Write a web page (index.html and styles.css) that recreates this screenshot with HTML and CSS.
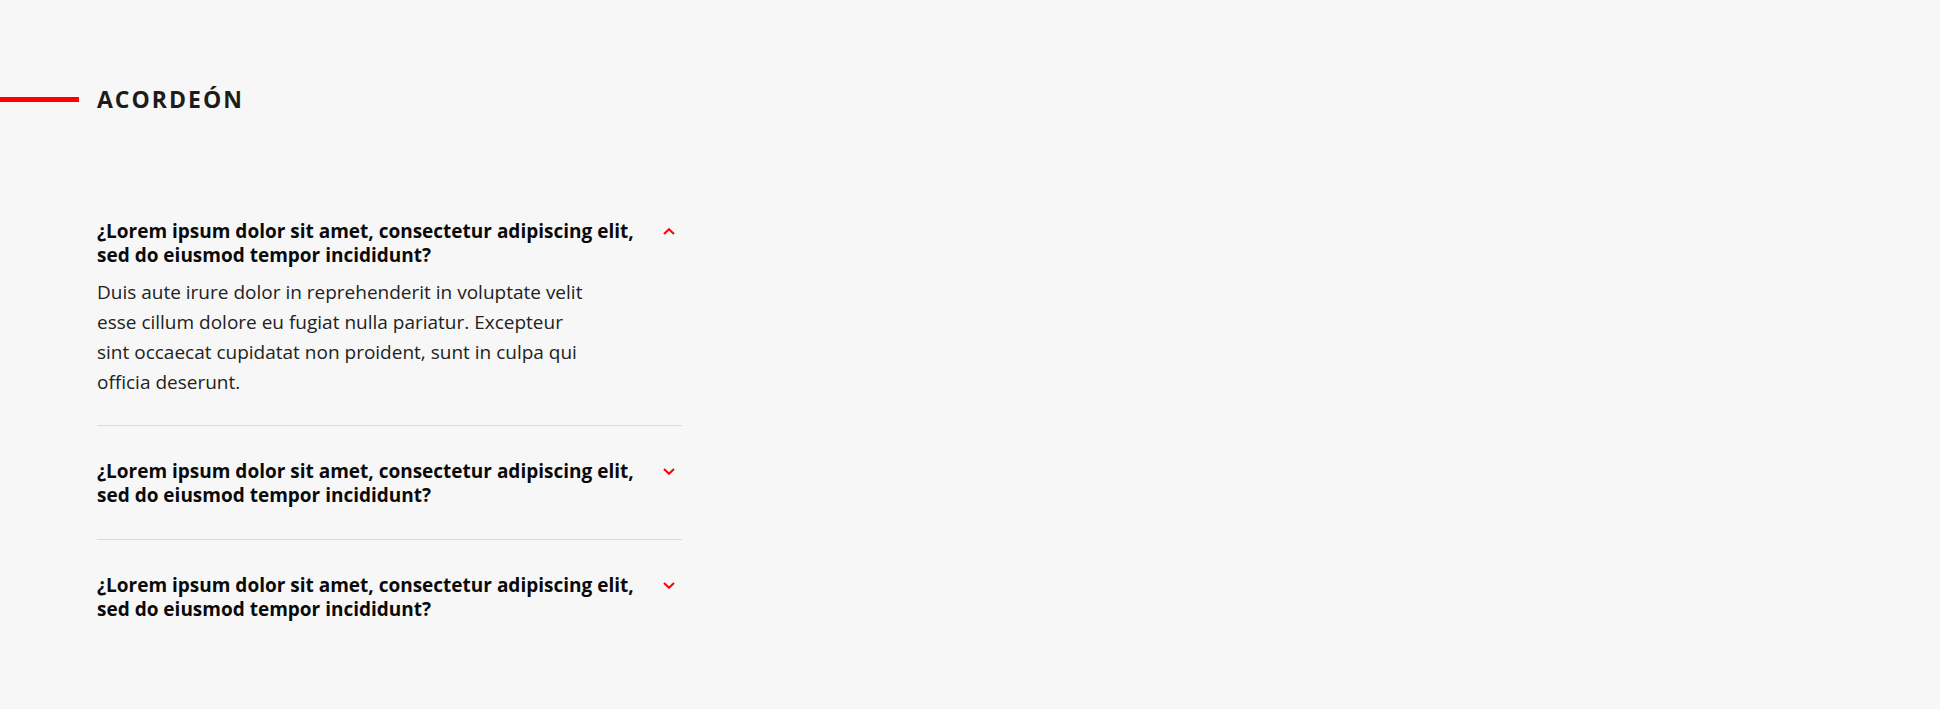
FILE: index.html
```html
<!DOCTYPE html>
<html lang="es">
<head>
<meta charset="utf-8">
<title>Acordeón</title>
<link rel="stylesheet" href="styles.css">
</head>
<body>
<main class="page">
  <header class="section-head">
    <span class="section-line"></span>
    <h2 class="section-title">ACORDEÓN</h2>
  </header>
  <div class="accordion">
    <div class="acc-item open">
      <div class="acc-head">
        <h3 class="acc-q">¿Lorem ipsum dolor sit amet, consectetur adipiscing elit, sed do eiusmod tempor incididunt?</h3>
        <svg class="acc-icon" width="12" height="7" viewBox="0 0 12 7"><polyline points="1,6 6,1.2 11,6" fill="none" stroke="#ff0000" stroke-width="2"/></svg>
      </div>
      <p class="acc-body">Duis aute irure dolor in reprehenderit in voluptate velit esse cillum dolore eu fugiat nulla pariatur. Excepteur sint occaecat cupidatat non proident, sunt in culpa qui officia deserunt.</p>
    </div>
    <div class="acc-item">
      <div class="acc-head">
        <h3 class="acc-q">¿Lorem ipsum dolor sit amet, consectetur adipiscing elit, sed do eiusmod tempor incididunt?</h3>
        <svg class="acc-icon" width="12" height="7" viewBox="0 0 12 7"><polyline points="1,1 6,5.8 11,1" fill="none" stroke="#ff0000" stroke-width="2"/></svg>
      </div>
    </div>
    <div class="acc-item">
      <div class="acc-head">
        <h3 class="acc-q">¿Lorem ipsum dolor sit amet, consectetur adipiscing elit, sed do eiusmod tempor incididunt?</h3>
        <svg class="acc-icon" width="12" height="7" viewBox="0 0 12 7"><polyline points="1,1 6,5.8 11,1" fill="none" stroke="#ff0000" stroke-width="2"/></svg>
      </div>
    </div>
  </div>
</main>
</body>
</html>
```
FILE: styles.css
```css
* { box-sizing: border-box; }
html, body { margin: 0; padding: 0; }
body {
  background: #f7f7f7;
  color: #111;
  font-family: "Open Sans", "Noto Sans", sans-serif;
}
.page {
  padding-top: 84px;
}
.section-head {
  display: flex;
  align-items: center;
  gap: 18px;
}
.section-line {
  display: block;
  width: 79px;
  height: 5px;
  background: #ff0000;
}
.section-title {
  margin: 0;
  font-size: 23px;
  font-weight: 700;
  letter-spacing: 2px;
  line-height: 30px;
  color: #1c1c1c;
}
.accordion {
  margin-left: 97px;
  width: 585px;
  margin-top: 72px;
}
.acc-item {
  padding: 33px 0 32px;
  border-bottom: 1px solid #dcdcdc;
}
.acc-item:last-child { border-bottom: none; }
.acc-head {
  display: flex;
  align-items: flex-start;
  justify-content: space-between;
}
.acc-q {
  margin: 0;
  width: 545px;
  font-size: 19px;
  line-height: 24px;
  font-weight: 700;
  color: #0a0a0a;
}
.acc-icon {
  margin-top: 9px;
  margin-right: 7px;
  flex: none;
}
.acc-body {
  margin: 10px 0 -4px;
  width: 502px;
  font-size: 19px;
  line-height: 30px;
  font-weight: 400;
  color: #222;
}
```
